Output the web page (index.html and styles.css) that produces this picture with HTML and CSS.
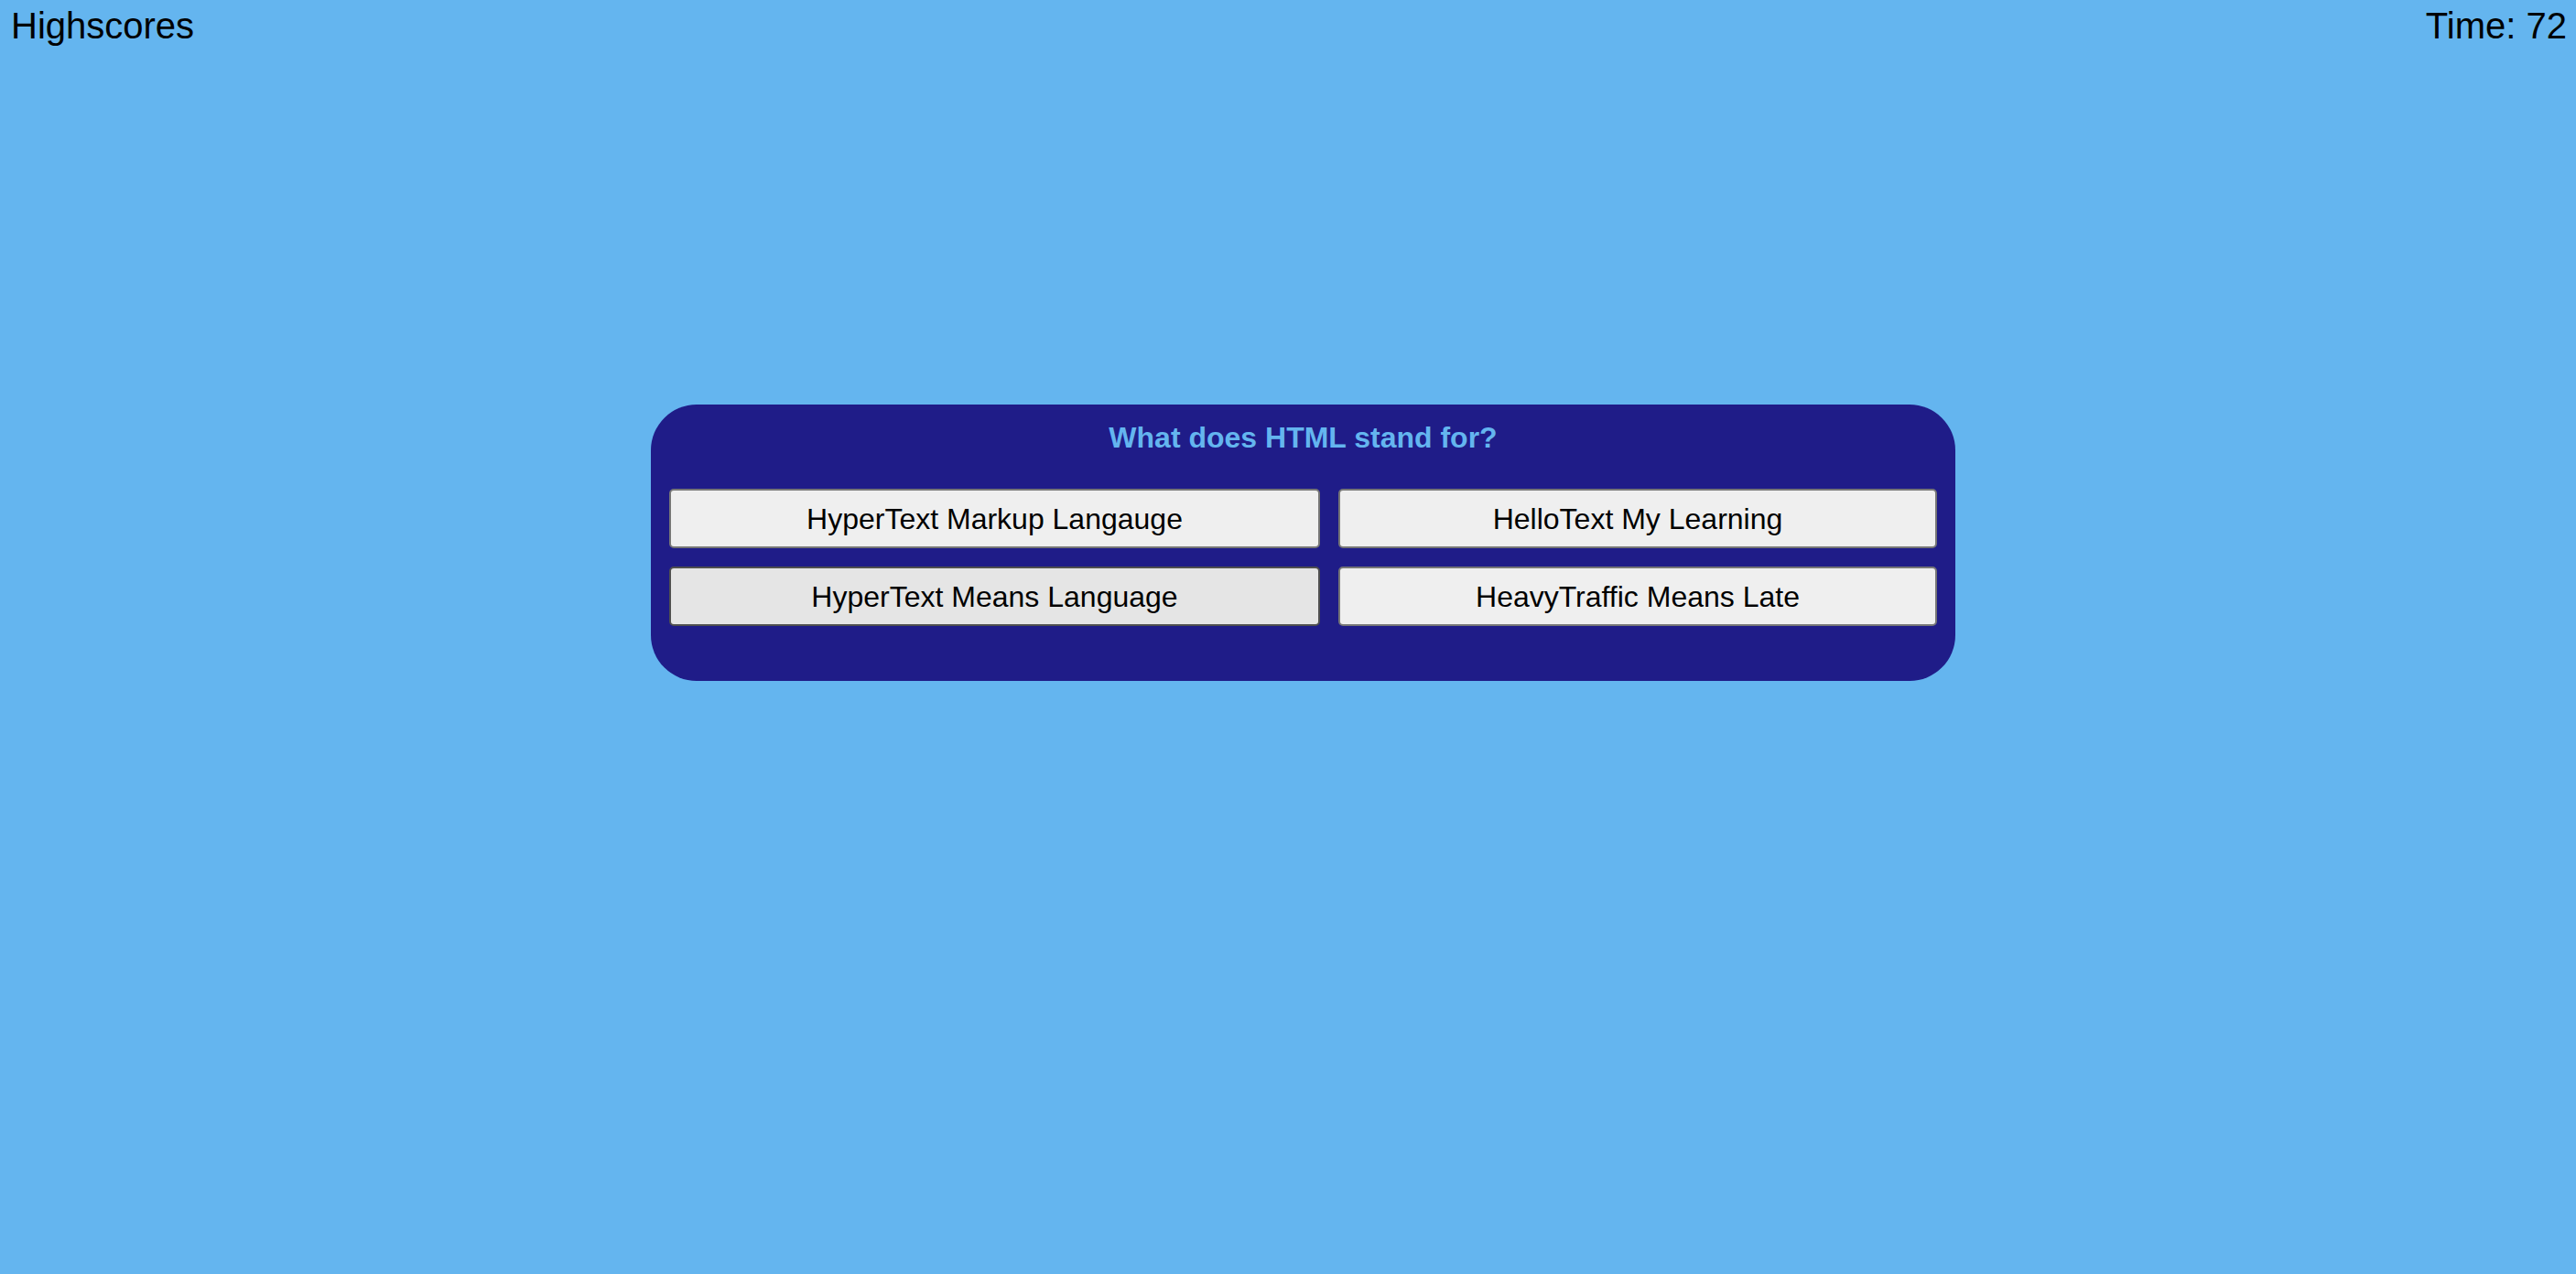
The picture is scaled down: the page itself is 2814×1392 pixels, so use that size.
FILE: index.html
```html
<!DOCTYPE html>
<html lang="en">
<head>
  <meta charset="utf-8">
  <meta name="viewport" content="width=device-width, initial-scale=1">
  <title>Code Quiz</title>
  <link rel="stylesheet" href="styles.css">
</head>
<body>
  <header class="topbar">
    <a class="highscores" href="#">Highscores</a>
    <div class="timer">Time: <span>72</span></div>
  </header>
  <main class="quiz">
    <section class="card">
      <h1 class="question">What does HTML stand for?</h1>
      <button class="answer" type="button">HyperText Markup Langauge</button>
      <button class="answer" type="button">HelloText My Learning</button>
      <button class="answer active" type="button">HyperText Means Language</button>
      <button class="answer" type="button">HeavyTraffic Means Late</button>
    </section>
  </main>
</body>
</html>
```

FILE: styles.css
```css
* {
  box-sizing: border-box;
}

body {
  margin: 0;
  background: #64b5ef;
  color: #000;
  font-family: "Liberation Sans", Arial, Helvetica, sans-serif;
}

.topbar {
  display: flex;
  justify-content: space-between;
  padding: 4px 10px 0 12px;
  font-size: 40px;
  line-height: 48px;
}

.highscores {
  color: inherit;
  text-decoration: none;
}

.quiz {
  padding: 390px 15px 0;
}

.card {
  display: grid;
  grid-template-columns: auto auto;
  gap: 20px;
  width: calc(50% + 33px);
  margin-left: 25%;
  padding: 16px 20px 60px;
  border-radius: 50px;
  background: #1f1c88;
}

.question {
  grid-column: 1 / -1;
  margin: 0 0 16px;
  color: #64b5ef;
  font-size: 32px;
  line-height: 40px;
  text-align: center;
}

.answer {
  padding: 11px 12px 10px;
  border: 2px solid #767676;
  border-radius: 5px;
  background: #efefef;
  color: #000;
  font-family: inherit;
  font-size: 32px;
  line-height: 40px;
}

.answer:hover,
.answer.active {
  border-color: #4f4f4f;
  background: #e5e5e5;
}
```
